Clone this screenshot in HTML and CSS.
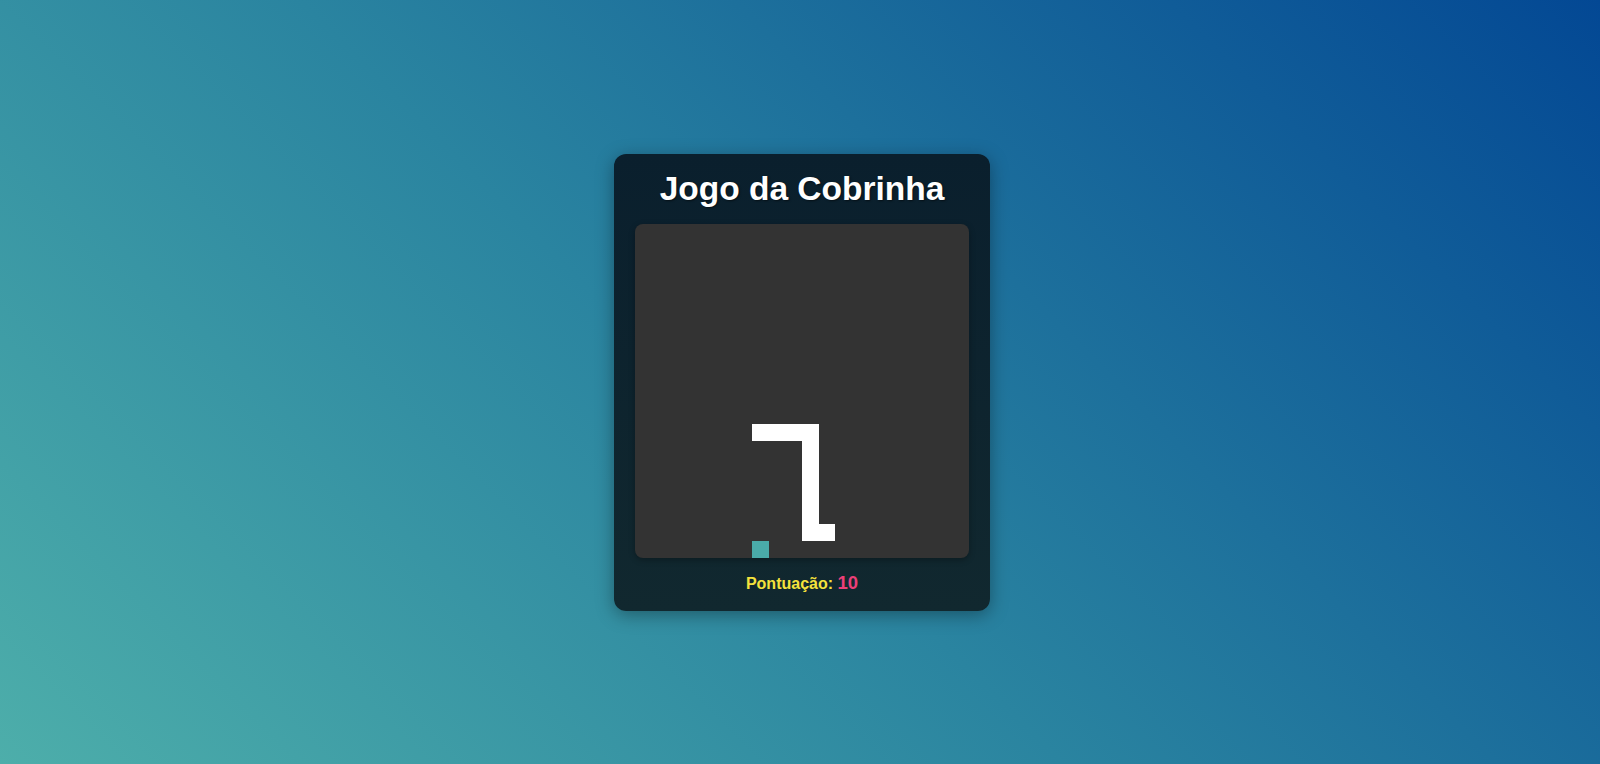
FILE: index.html
```html
<!DOCTYPE html>
<html lang="pt">
<head>
<meta charset="utf-8">
<title>Jogo da Cobrinha</title>
<link rel="stylesheet" href="styles.css">
</head>
<body>
  <main class="card">
    <h1 class="title">Jogo da Cobrinha</h1>
    <div class="board">
      <div class="cell snake" style="grid-area: 13 / 8 / 14 / 12"></div>
      <div class="cell snake" style="grid-area: 13 / 11 / 20 / 12"></div>
      <div class="cell snake" style="grid-area: 19 / 11 / 20 / 13"></div>
      <div class="cell apple" style="grid-area: 20 / 8 / 21 / 9"></div>
    </div>
    <div class="score">Pontuação: <span class="score-value">10</span></div>
  </main>
</body>
</html>
```
FILE: styles.css
```css
html, body {
  margin: 0;
  height: 100%;
}
body {
  display: flex;
  align-items: center;
  justify-content: center;
  background: linear-gradient(45deg, #4daeaa 0%, #2a84a0 45%, #034894 100%);
  font-family: "Liberation Sans", Arial, sans-serif;
}
.card {
  box-sizing: border-box;
  width: 376px;
  height: 457px;
  margin-left: 4px;
  padding: 16px 21px 0;
  border-radius: 12px;
  background: linear-gradient(180deg, #0a1f2d 0%, #11282f 100%);
  box-shadow: 0 4px 18px rgba(0, 0, 0, 0.35);
  display: flex;
  flex-direction: column;
  align-items: center;
}
.title {
  margin: 0 0 17px;
  color: #ffffff;
  font-size: 33.5px;
  line-height: 37px;
  font-weight: bold;
  text-shadow: 1px 1px 2px rgba(0, 0, 0, 0.5);
}
.board {
  width: 334px;
  height: 334px;
  background: #333333;
  border-radius: 8px;
  display: grid;
  grid-template-columns: repeat(20, 1fr);
  grid-template-rows: repeat(20, 1fr);
  box-shadow: 0 2px 6px rgba(0, 0, 0, 0.3);
}
.snake {
  background: #ffffff;
}
.apple {
  background: #4aaba9;
}
.score {
  margin-top: 15px;
  color: #f4e23c;
  font-size: 16px;
  font-weight: bold;
  line-height: 20px;
}
.score-value {
  color: #ec3f78;
  font-size: 18.5px;
}
```
